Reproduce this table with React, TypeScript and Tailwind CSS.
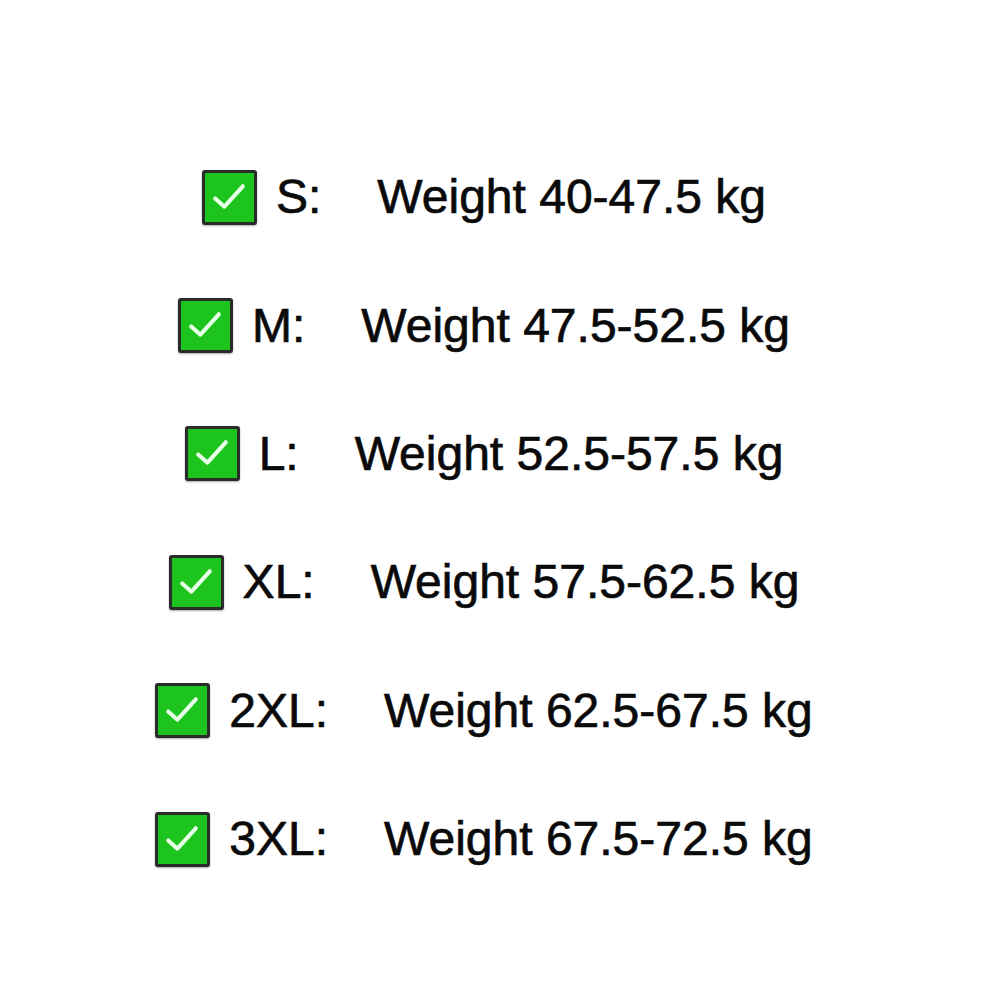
import React from "react";

const rows = [
  { size: "S:", w: "Weight 40-47.5 kg" },
  { size: "M:", w: "Weight 47.5-52.5 kg" },
  { size: "L:", w: "Weight 52.5-57.5 kg" },
  { size: "XL:", w: "Weight 57.5-62.5 kg" },
  { size: "2XL:", w: "Weight 62.5-67.5 kg" },
  { size: "3XL:", w: "Weight 67.5-72.5 kg" },
];

function Check() {
  return (
    <div className="w-[55px] h-[55px] shrink-0 rounded-[3px] border-[3px] border-[#2b2b2b] bg-[#1dc41d] shadow-[0_1px_2px_rgba(0,0,0,0.35)] flex items-center justify-center">
      <svg width="49" height="49" viewBox="0 0 48 48">
        <path d="M10 25 L19 33 L37 13" fill="none" stroke="#e6ffe6" strokeWidth="4" strokeLinecap="round" strokeLinejoin="round" />
      </svg>
    </div>
  );
}

export default function App() {
  return (
    <div className="w-[1000px] h-[1000px] bg-white flex flex-col items-center pt-[133px] pr-[32px] text-[#0a0a0a] font-['Liberation_Sans',Arial,sans-serif] [-webkit-text-stroke:0.7px_#0a0a0a]">
      {rows.map((r) => (
        <div key={r.size} className="h-[128.4px] flex items-center">
          <Check />
          <span className="ml-[19px] text-[48px] leading-none">{r.size}</span>
          <span className="ml-[56px] text-[48px] leading-none">{r.w}</span>
        </div>
      ))}
    </div>
  );
}
